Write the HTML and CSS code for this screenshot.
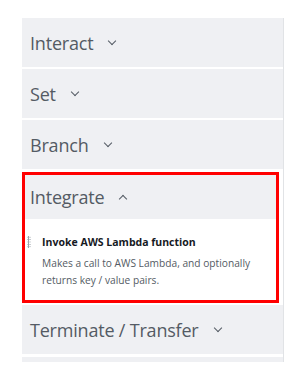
FILE: index.html
```html
<!doctype html>
<html lang="en">
<head>
<meta charset="UTF-8">
<title>Flow blocks</title>
<link rel="stylesheet" href="styles.css">
</head>
<body>
	<div class="panel">
		<div class="group">
			<div class="head">Interact <span class="chev down"></span></div>
		</div>
		<div class="group">
			<div class="head">Set <span class="chev down"></span></div>
		</div>
		<div class="group">
			<div class="head">Branch <span class="chev down"></span></div>
		</div>
		<div class="group open">
			<div class="head">Integrate <span class="chev up"></span></div>
			<div class="item">
				<span class="grip"></span>
				<div class="info">
					<div class="title">Invoke AWS Lambda function</div>
					<div class="desc">Makes a call to AWS Lambda, and optionally returns key / value pairs.</div>
				</div>
			</div>
		</div>
		<div class="group">
			<div class="head">Terminate / Transfer <span class="chev down"></span></div>
		</div>
		<div class="group stub"></div>
	</div>
</body>
</html>
```

FILE: styles.css
```css
* {margin:0;padding:0;box-sizing:border-box;}
body{background:#fff;font-family:"Open Sans","Noto Sans",sans-serif;color:#545b64;}
.panel{margin:18px 0 0 22px;width:262px;border-right:1px solid #e1e3e6;display:flex;flex-direction:column;gap:2px;}
.group{background:#eff0f3;}
.head{height:49px;display:flex;align-items:center;padding-left:8px;font-size:18px;letter-spacing:-0.2px;}
.chev{display:inline-block;width:6px;height:6px;border-right:1.5px solid #545b64;border-bottom:1.5px solid #545b64;margin-left:16px;}
.chev.down{transform:rotate(45deg);margin-top:-4px;}
.chev.up{transform:rotate(-135deg);margin-top:4px;}
.group.open{border:3px solid #f00;margin-right:4px;margin-top:1px;background:#fff;}
.group.open .head{background:#eff0f3;height:44px;padding-left:5px;}
.item{display:flex;padding:16px 10px 11px 2px;}
.grip{width:6px;height:12px;margin-top:1px;background:radial-gradient(circle,#9ea5ad 0.9px,transparent 1.2px) 0 0/3px 2.4px;}
.info{margin-left:11px;}
.title{font-size:10.5px;font-weight:bold;color:#16191f;line-height:14px;}
.desc{font-size:10.2px;line-height:17px;margin-top:6px;}
.stub{height:5px;margin-top:1px;}
```
